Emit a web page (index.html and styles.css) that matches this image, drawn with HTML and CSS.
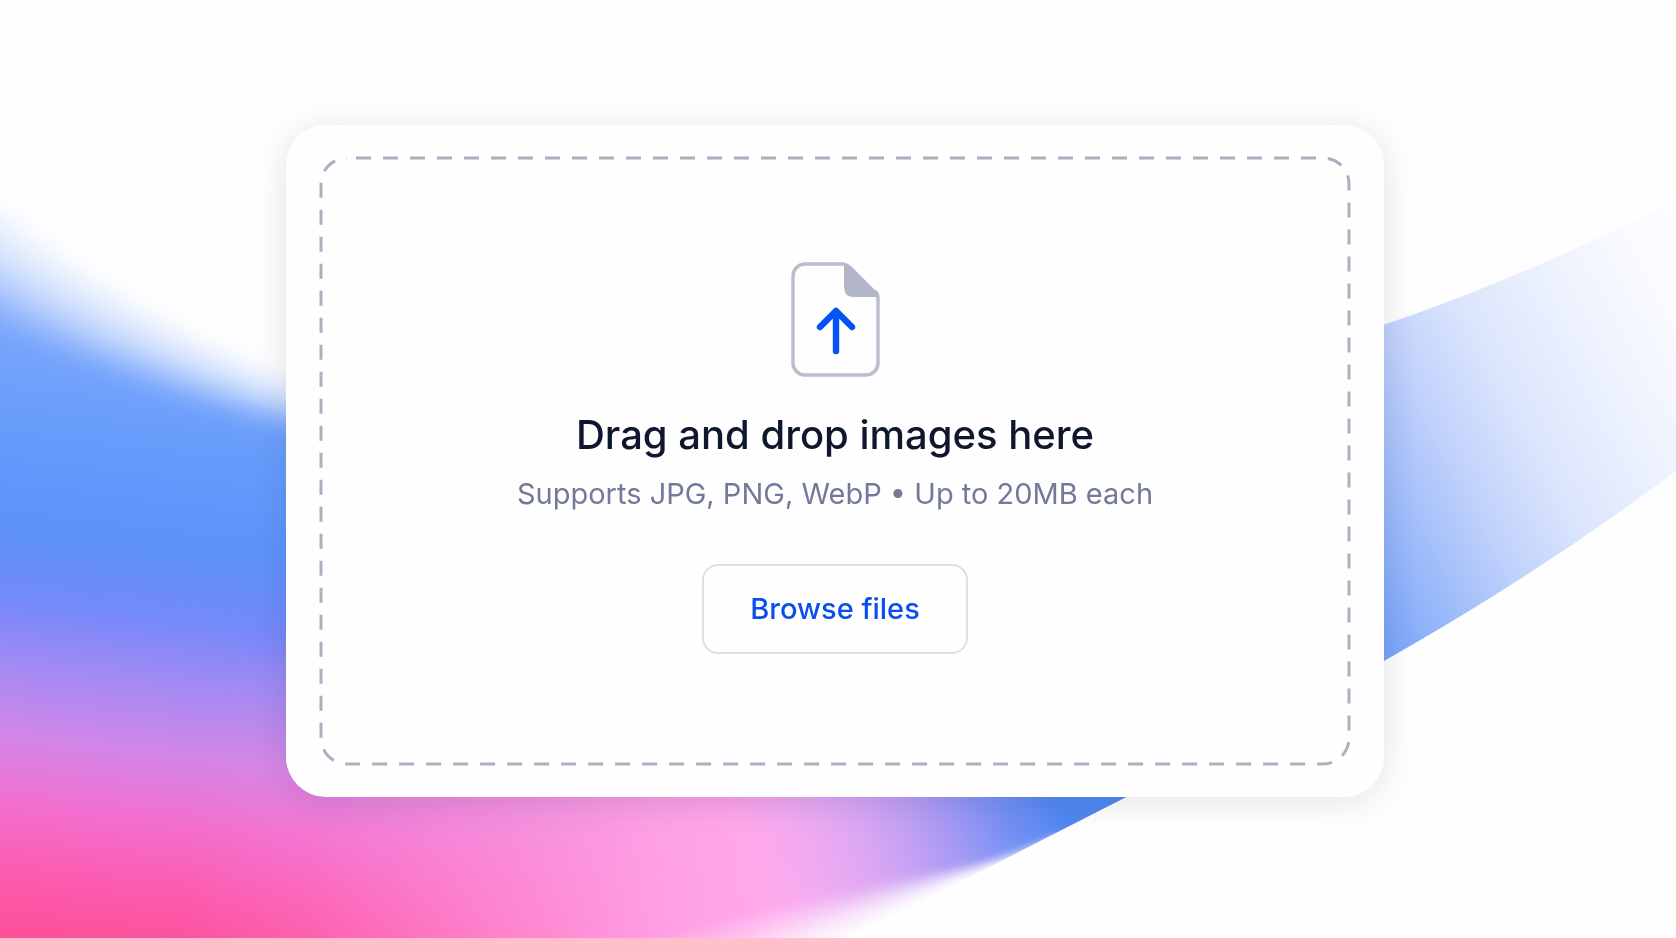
FILE: index.html
```html
<!DOCTYPE html>
<html lang="en">
<head>
<meta charset="utf-8">
<meta name="viewport" content="width=device-width, initial-scale=1">
<title>Upload images</title>
<link rel="stylesheet" href="styles.css">
</head>
<body>
<svg class="backdrop" viewBox="0 0 1676 938" preserveAspectRatio="none" aria-hidden="true">
  <defs>
    <linearGradient id="sweep" gradientUnits="userSpaceOnUse" x1="0" y1="320" x2="-70" y2="930">
      <stop offset="0" stop-color="#7aa6fb"/>
      <stop offset=".19" stop-color="#659bfb"/>
      <stop offset=".33" stop-color="#5c93fb"/>
      <stop offset=".45" stop-color="#7489fa"/>
      <stop offset=".56" stop-color="#a48af3"/>
      <stop offset=".67" stop-color="#d286e8"/>
      <stop offset=".78" stop-color="#f26fcf"/>
      <stop offset=".89" stop-color="#fc5cb0"/>
      <stop offset="1" stop-color="#fc4f97"/>
    </linearGradient>
    <linearGradient id="wing" gradientUnits="userSpaceOnUse" x1="1384" y1="661" x2="1801" y2="438">
      <stop offset="0" stop-color="#76a2f9"/>
      <stop offset=".15" stop-color="#98b8fa"/>
      <stop offset=".33" stop-color="#c0d1fb"/>
      <stop offset=".5" stop-color="#dbe5fc"/>
      <stop offset=".7" stop-color="#edf2fe"/>
      <stop offset=".87" stop-color="#f9faff"/>
      <stop offset="1" stop-color="#fdfdff"/>
    </linearGradient>
    <linearGradient id="blush" gradientUnits="userSpaceOnUse" x1="180" y1="0" x2="820" y2="0">
      <stop offset="0" stop-color="#ff8fd6" stop-opacity="0"/>
      <stop offset=".2" stop-color="#ff8fd6" stop-opacity=".2"/>
      <stop offset=".45" stop-color="#ff94da" stop-opacity=".6"/>
      <stop offset=".75" stop-color="#ffa2e4" stop-opacity=".95"/>
      <stop offset="1" stop-color="#ffaeee"/>
    </linearGradient>
    <linearGradient id="tip" gradientUnits="userSpaceOnUse" x1="765" y1="890" x2="1050" y2="780">
      <stop offset="0" stop-color="#dfa4f4" stop-opacity="0"/>
      <stop offset=".35" stop-color="#d0a4f4" stop-opacity=".75"/>
      <stop offset=".62" stop-color="#a99af4"/>
      <stop offset=".82" stop-color="#7590f4"/>
      <stop offset="1" stop-color="#4f88f2"/>
    </linearGradient>
    <linearGradient id="rise" x1="0" y1="0" x2="0" y2="1">
      <stop offset="0" stop-color="#fff" stop-opacity="0"/>
      <stop offset=".6" stop-color="#fff"/>
    </linearGradient>
    <mask id="low" maskUnits="userSpaceOnUse" x="0" y="640" width="1300" height="298">
      <rect x="0" y="640" width="1300" height="298" fill="url(#rise)"/>
    </mask>
    <filter id="soft" x="-20%" y="-20%" width="140%" height="140%"><feGaussianBlur stdDeviation="10"/></filter>
    <filter id="haze" x="-20%" y="-20%" width="140%" height="140%"><feGaussianBlur stdDeviation="5"/></filter>
  </defs>
  <path fill="url(#sweep)" d="M0 150H1180V770L1128 796Q989 867 850 938H0Z"/>
  <path fill="url(#blush)" mask="url(#low)" d="M180 640H1180V770L1128 796Q989 867 850 938H180Z"/>
  <path fill="url(#tip)" d="M600 740H1180V770L1128 796Q989 867 850 938H600Z"/>
  <path fill="url(#wing)" d="M1300 351Q1480 300 1676 200V471Q1540 573 1384 661L1300 706Z"/>
  <g fill="#fefefe" filter="url(#soft)">
    <path d="M-60 155Q120 320 340 398V60H-60Z"/>
    <path opacity=".4" d="M-60 174Q120 330 340 404V60H-60Z"/>
    <path opacity=".35" d="M-60 193Q120 341 340 410V60H-60Z"/>
    <path opacity=".3" d="M-60 212Q120 352 340 416V60H-60Z"/>
    <path opacity=".28" d="M-60 231Q120 363 340 422V60H-60Z"/>
    <path opacity=".25" d="M-60 250Q120 374 340 428V60H-60Z"/>
    <path opacity=".2" d="M-60 269Q120 384 340 434V60H-60Z"/>
    <path opacity=".14" d="M-60 290Q120 396 340 440V60H-60Z"/>
  </g>
  <g fill="#fefefe" filter="url(#haze)">
    <path d="M1060 836Q950 880 770 970H1060Z"/>
    <path opacity=".5" d="M1050 841Q935 881 735 970H1060Z"/>
    <path opacity=".35" d="M1040 846Q920 881 700 970H1060Z"/>
    <path opacity=".27" d="M1030 851Q905 881 665 970H1060Z"/>
    <path opacity=".2" d="M1020 856Q885 880 620 970H1060Z"/>
    <path opacity=".15" d="M1010 861Q865 878 570 970H1060Z"/>
  </g>
</svg>

<main class="page">
  <section class="card">
    <div class="dropzone">
      <svg class="dropzone-outline" aria-hidden="true"><rect class="dropzone-dash"/></svg>
      <svg class="file-icon" viewBox="0 0 90 116" fill="none" aria-hidden="true">
        <path d="M54 2H15A12 12 0 0 0 3 14V101A12 12 0 0 0 15 113H76A12 12 0 0 0 88 101V36Q88 32 85 29" stroke="#bcbccd" stroke-width="3.4"/>
        <path d="M54 .5Q58 1 61 4L86 29Q89 32 89 35H64Q54 35 54 25Z" fill="#b3b5c9"/>
        <path d="M46 89V49M30 65L46 49L62 65" stroke="#0553f2" stroke-width="6.4" stroke-linecap="round" stroke-linejoin="round"/>
      </svg>
      <h1 class="title">Drag and drop images here</h1>
      <p class="hint">Supports JPG, PNG, WebP • Up to 20MB each</p>
      <button class="browse" type="button">Browse files</button>
    </div>
  </section>
</main>
</body>
</html>
```
FILE: styles.css
```css
* {
  box-sizing: border-box;
}

body {
  margin: 0;
  background: #fefefe;
  font-family: Inter, "Liberation Sans", sans-serif;
}

.backdrop {
  position: fixed;
  inset: 0;
  z-index: -1;
  width: 100%;
  height: 100%;
}

.page {
  display: flex;
  align-items: center;
  justify-content: center;
  min-height: 100vh;
  padding: 24px 30px 40px 24px;
}

.card {
  width: 100%;
  max-width: 1098px;
  padding: 31px 33px;
  border-radius: 40px;
  background: #fefefe;
  box-shadow: 0 4px 36px rgba(20, 20, 40, 0.11);
}

.dropzone {
  position: relative;
  display: flex;
  flex-direction: column;
  align-items: center;
  padding: 106px 32px 112px;
  text-align: center;
}

.dropzone-outline {
  position: absolute;
  inset: 0;
  width: 100%;
  height: 100%;
  pointer-events: none;
}

.dropzone-dash {
  x: 2px;
  y: 2px;
  width: calc(100% - 4px);
  height: calc(100% - 4px);
  rx: 26px;
  fill: none;
  stroke: #adaec0;
  stroke-width: 3px;
  stroke-dasharray: 15 12;
  stroke-dashoffset: -9px;
}

.file-icon {
  width: 90px;
  height: 116px;
}

.title {
  margin: 33px 0 0;
  color: #0f172e;
  font-size: 40px;
  font-weight: 500;
  line-height: 48px;
}

.hint {
  margin: 17px 0 0;
  color: #72799a;
  font-size: 29px;
  line-height: 36px;
}

.browse {
  margin-top: 52px;
  padding: 25px 46px;
  border: 2px solid #dddfe8;
  border-radius: 16px;
  background: #fefefe;
  color: #0a4fee;
  font: inherit;
  font-size: 29px;
  font-weight: 500;
  line-height: 36px;
  cursor: pointer;
}
```
